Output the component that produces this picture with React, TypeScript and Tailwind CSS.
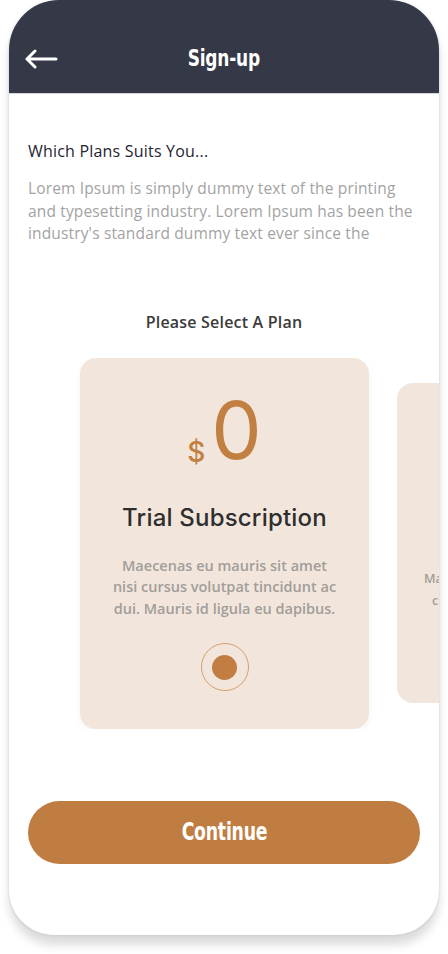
import React from "react";

const poppins = { fontFamily: '"Open Sans", "Noto Sans", sans-serif' };
const narrow = { fontFamily: '"DejaVu Sans", sans-serif' };

function Card({ small }: { small?: boolean }) {
  if (small) {
    return (
      <div className="shrink-0 w-[250px] h-[320px] rounded-[16px] bg-[#f2e6dc] flex flex-col pt-[185px] pl-[27px]">
        <p className="text-[12.5px] leading-[22px] font-semibold text-[#a19d99] text-left" style={poppins}>
          Maecenas eu mauris sit
          <br />
          <span className="pl-[8px]">cursus volutpat</span>
        </p>
      </div>
    );
  }
  return (
    <div className="shrink-0 w-[289px] h-[371px] rounded-[16px] bg-[#f2e6dc] shadow-[0_2px_6px_rgba(0,0,0,0.05)] flex flex-col items-center pt-[30px]">
      <div className="flex items-end text-[#c17f42]" style={{ fontFamily: 'Inter, "Noto Sans", sans-serif' }}>
        <span className="text-[28px] leading-none mb-[6px] mr-[6px] font-medium">$</span>
        <span className="text-[80px] leading-[84px] font-normal">0</span>
      </div>
      <div className="mt-[31px] text-[24px] leading-[30px] font-medium text-[#2e2e2e] tracking-[0.2px]" style={{ fontFamily: 'Inter, "Noto Sans", sans-serif' }}>
        Trial Subscription
      </div>
      <p className="mt-[22px] text-center text-[14.5px] leading-[21.5px] font-semibold text-[#a19d99]" style={poppins}>
        Maecenas eu mauris sit amet
        <br />
        nisi cursus volutpat tincidunt ac
        <br />
        dui. Mauris id ligula eu dapibus.
      </p>
      <div className="mt-[24px] w-[48px] h-[48px] rounded-full border border-[#d6a06d] flex items-center justify-center">
        <div className="w-[25px] h-[25px] rounded-full bg-[#c17d42]" />
      </div>
    </div>
  );
}

export default function App() {
  return (
    <div className="w-[448px] h-[954px] bg-white">
      <div className="ml-[9px] w-[430px] h-[935px] bg-white rounded-t-[50px] rounded-b-[45px] overflow-hidden shadow-[0_10px_10px_rgba(0,0,0,0.14),0_0_3px_rgba(0,0,0,0.12)] flex flex-col">
        <div className="relative h-[94px] bg-[#353846] border-b border-[#d4d4d4] pt-[24px] flex items-center justify-center shrink-0">
          <svg className="absolute left-[15px] top-[49px]" width="34" height="20" viewBox="0 0 34 20" fill="none">
            <path d="M32 10H3M11 2L3 10L11 18" stroke="white" strokeWidth="3" strokeLinecap="round" strokeLinejoin="round" />
          </svg>
          <span className="inline-block scale-x-[0.74] text-white text-[23px] font-bold tracking-[-0.3px]" style={narrow}>
            Sign-up
          </span>
        </div>
        <div className="px-[19px] pt-[46px]" style={poppins}>
          <h2 className="text-[16px] leading-[22px] text-[#1f2433] font-normal tracking-[0.2px]">Which Plans Suits You...</h2>
          <p className="mt-[15px] text-[15.5px] leading-[22.5px] text-[#a3a3a3] tracking-[0.15px]">
            Lorem Ipsum is simply dummy text of the printing
            <br />
            and typesetting industry. Lorem Ipsum has been the
            <br />
            industry's standard dummy text ever since the
          </p>
          <p className="mt-[66px] text-center text-[16px] leading-[22px] font-semibold text-[#3b3b3b] tracking-[0.2px]">Please Select A Plan</p>
        </div>
        <div className="mt-[25px] flex items-center gap-[28px] pl-[71px] overflow-hidden">
          <Card />
          <Card small />
        </div>
        <div className="px-[19px] mt-[72px]">
          <button className="w-full h-[63px] rounded-full bg-[#c07d42] flex items-center justify-center">
            <span className="inline-block scale-x-[0.72] text-white text-[24px] font-bold tracking-[-0.3px]" style={narrow}>
              Continue
            </span>
          </button>
        </div>
      </div>
    </div>
  );
}
